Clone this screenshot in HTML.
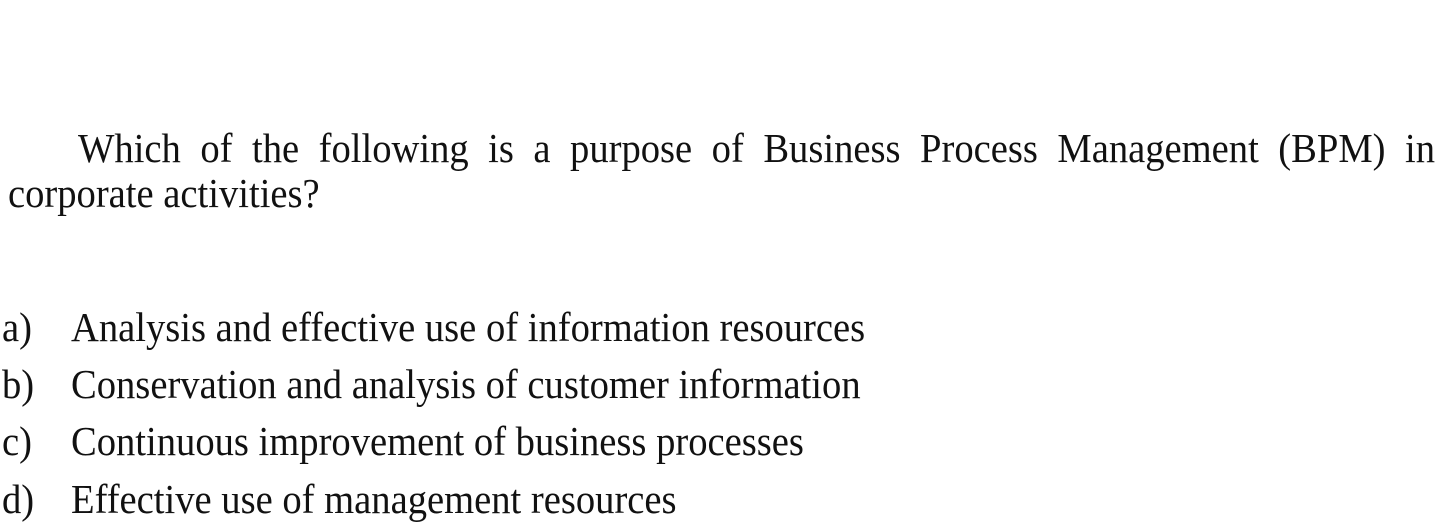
<!DOCTYPE html>
<html><head><meta charset="utf-8"><style>
html,body{margin:0;padding:0;background:#fff;width:1439px;height:522px;overflow:hidden}
body{position:relative;font-family:"Liberation Serif",serif;font-size:38.6px;color:#111}
.l{position:absolute;line-height:38px;white-space:nowrap;transform:scaleY(1.08);transform-origin:0 32px}
.j{text-align:justify;text-align-last:justify;white-space:normal}
</style></head><body>
<div class="l j" style="left:78px;top:131px;width:1357px">Which of the following is a purpose of Business Process Management (BPM) in</div>
<div class="l" style="left:8px;top:176px">corporate activities?</div>
<div class="l" style="left:2px;top:310px">a)</div><div class="l" style="left:71px;top:310px">Analysis and effective use of information resources</div>
<div class="l" style="left:2px;top:367px">b)</div><div class="l" style="left:71px;top:367px">Conservation and analysis of customer information</div>
<div class="l" style="left:2px;top:424px">c)</div><div class="l" style="left:71px;top:424px">Continuous improvement of business processes</div>
<div class="l" style="left:2px;top:482px">d)</div><div class="l" style="left:71px;top:482px">Effective use of management resources</div>
</body></html>
